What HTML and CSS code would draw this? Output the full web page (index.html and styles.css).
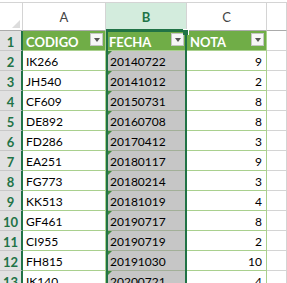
FILE: index.html
```html
<!DOCTYPE html>
<html>
<head>
<meta charset="utf-8">
<link rel="stylesheet" href="styles.css">
</head>
<body>
<div class="sheet">
  <div class="topbar"></div>
  <div class="grid">
    <div class="corner"><span class="corner-tri"></span></div>
    <div class="ch">A</div>
    <div class="ch sel">B</div>
    <div class="ch">C</div>
    <div class="ch"></div>

    <div class="rh">1</div>
    <div class="th">CODIGO<span class="filter"></span></div>
    <div class="th">FECHA<span class="filter"></span></div>
    <div class="th">NOTA<span class="filter"></span></div>
    <div class="e"></div>

    <div class="rh">2</div><div class="td">IK266</div><div class="td b">20140722</div><div class="td num">9</div><div class="e"></div>
    <div class="rh">3</div><div class="td">JH540</div><div class="td b">20141012</div><div class="td num">2</div><div class="e"></div>
    <div class="rh">4</div><div class="td">CF609</div><div class="td b">20150731</div><div class="td num">8</div><div class="e"></div>
    <div class="rh">5</div><div class="td">DE892</div><div class="td b">20160708</div><div class="td num">8</div><div class="e"></div>
    <div class="rh">6</div><div class="td">FD286</div><div class="td b">20170412</div><div class="td num">3</div><div class="e"></div>
    <div class="rh">7</div><div class="td">EA251</div><div class="td b">20180117</div><div class="td num">9</div><div class="e"></div>
    <div class="rh">8</div><div class="td">FG773</div><div class="td b">20180214</div><div class="td num">3</div><div class="e"></div>
    <div class="rh">9</div><div class="td">KK513</div><div class="td b">20181019</div><div class="td num">4</div><div class="e"></div>
    <div class="rh">10</div><div class="td">GF461</div><div class="td b">20190717</div><div class="td num">8</div><div class="e"></div>
    <div class="rh">11</div><div class="td">CI955</div><div class="td b">20190719</div><div class="td num">2</div><div class="e"></div>
    <div class="rh">12</div><div class="td">FH815</div><div class="td b">20191030</div><div class="td num">10</div><div class="e"></div>
    <div class="rh">13</div><div class="td">IK140</div><div class="td b">20200721</div><div class="td num">4</div><div class="e"></div>
  </div>
  <div class="selection"><span class="handle"></span></div>
</div>
</body>
</html>
```

FILE: styles.css
```css
html, body {
  margin: 0;
  padding: 0;
  background: #ffffff;
}
body {
  width: 287px;
  height: 283px;
  overflow: hidden;
  font-family: Lato, "Liberation Sans", sans-serif;
  font-size: 12px;
  color: #000;
}
.sheet {
  position: relative;
}
.topbar {
  height: 2px;
  border-bottom: 1px solid #d4d4d4;
}
.grid {
  display: grid;
  grid-template-columns: 23px 83px 81px 80px 1fr;
  grid-template-rows: 28px repeat(13, 20px);
}
.grid > div {
  box-sizing: border-box;
  border-right: 1px solid #d4d4d4;
  border-bottom: 1px solid #d4d4d4;
  line-height: 14px;
  white-space: nowrap;
}
.corner {
  display: flex;
  justify-content: flex-end;
  align-items: flex-end;
  padding: 0 2px 2px 0;
  border-bottom-color: #ababab !important;
}
.corner-tri {
  width: 0;
  height: 0;
  border-left: 8px solid transparent;
  border-bottom: 8px solid #dcdcdc;
}
.ch {
  display: flex;
  align-items: center;
  justify-content: center;
  color: #444;
  font-size: 13px;
  padding-top: 1px;
  border-bottom-color: #ababab !important;
}
.ch.sel {
  background: #d3ecdd;
  color: #217346;
  font-weight: bold;
  border-bottom: 2px solid #217346 !important;
}
.rh {
  display: flex;
  align-items: flex-end;
  justify-content: center;
  padding-bottom: 1px;
  background: #e1e1e1;
  color: #217346;
  font-weight: bold;
  font-size: 13px;
  border-right: 2px solid #217346 !important;
  border-bottom-color: #c8c8c8 !important;
}
.th {
  display: flex;
  align-items: flex-end;
  justify-content: space-between;
  padding: 0 2px 1px 3px;
  background: #70ad47;
  color: #fff;
  font-weight: bold;
  font-size: 13px;
  border-right-color: #a9d08e !important;
  border-bottom-color: #a9d08e !important;
}
.filter {
  box-sizing: border-box;
  width: 13px;
  height: 13px;
  margin-bottom: 3px;
  background: #f7f7f7;
  border: 1px solid #c4c4c4;
  display: flex;
  align-items: center;
  justify-content: center;
}
.filter::after {
  content: "";
  width: 0;
  height: 0;
  margin-top: 1px;
  border-left: 3px solid transparent;
  border-right: 3px solid transparent;
  border-top: 4px solid #555;
}
.td {
  display: flex;
  align-items: flex-end;
  padding: 0 3px 1px 3px;
  border-right-color: #a9d08e !important;
  border-bottom-color: #a9d08e !important;
}
.td.b {
  position: relative;
  padding-left: 4px;
  background: #c6c6c6;
  border-bottom-color: #a3b099 !important;
}
.td.b::before {
  content: "";
  position: absolute;
  left: 2px;
  top: 0;
  width: 0;
  height: 0;
  border-top: 4px solid #3c8a3c;
  border-right: 4px solid transparent;
}
.td.num {
  justify-content: flex-end;
  padding-right: 4px;
}
.e {
  background: #fff;
}
.selection {
  position: absolute;
  left: 106px;
  top: 30px;
  width: 81px;
  height: 300px;
  box-sizing: border-box;
  border: 2px solid #217346;
}
.handle {
  position: absolute;
  right: -4px;
  top: -3px;
  width: 5px;
  height: 5px;
  background: #217346;
  border: 1px solid #fff;
  border-left: none;
  border-bottom: none;
}
```
